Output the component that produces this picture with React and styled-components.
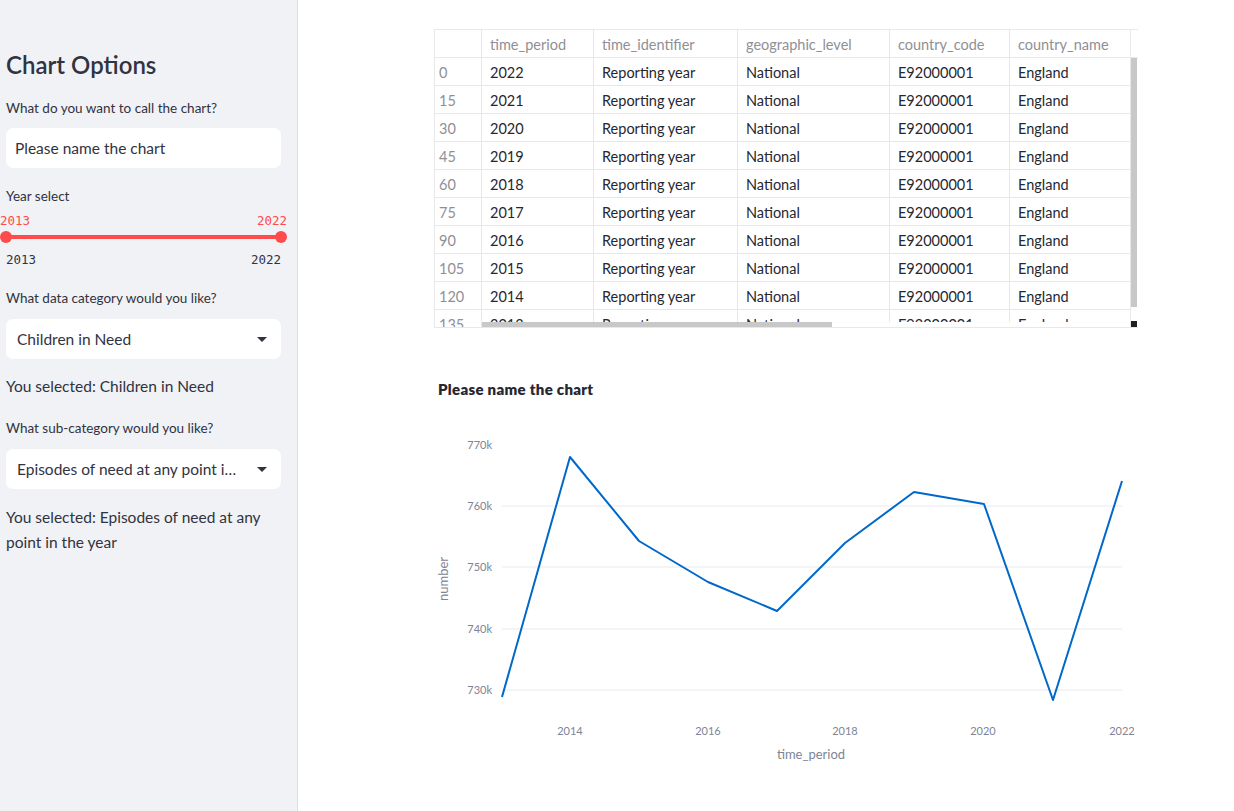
import React from 'react'
import styled, { createGlobalStyle } from 'styled-components'

const GlobalStyle = createGlobalStyle`
  html, body { margin: 0; padding: 0; background: #ffffff; }
  body { font-family: 'Lato', 'Noto Sans', sans-serif; color: #31333f; }
  * { box-sizing: border-box; }
`

const columns = ['time_period', 'time_identifier', 'geographic_level', 'country_code', 'country_name']
const rows = [0, 15, 30, 45, 60, 75, 90, 105, 120, 135].map((idx, i) => ({
  idx,
  cells: [String(2022 - i), 'Reporting year', 'National', 'E92000001', 'England'],
}))

const points = [
  [502, 698], [570, 458], [639, 542], [708, 583], [777, 612],
  [845, 544], [914, 493], [984, 505], [1053, 701], [1122, 482],
]
const yTicks = [['770k', 446, false], ['760k', 507, true], ['750k', 568, true], ['740k', 630, true], ['730k', 691, true]]
const xTicks = [['2014', 570], ['2016', 708], ['2018', 845], ['2020', 983], ['2022', 1122]]

const Page = styled.div`
  display: flex;
  min-height: 811px;
`

const Sidebar = styled.aside`
  width: 298px;
  flex-shrink: 0;
  min-height: 811px;
  background: #f0f2f6;
  border-right: 1px solid #dcdde3;
  padding: 50px 16px 0 6px;
  display: flex;
  flex-direction: column;
`

const Heading = styled.h2`
  margin: 0;
  font-size: 24px;
  line-height: 30px;
  font-weight: 600;
  color: #31333f;
`

const Label = styled.div`
  margin-top: ${p => p.$top}px;
  font-size: 13.5px;
  line-height: 20px;
  color: #31333f;
`

const TextInput = styled.div`
  margin-top: 10px;
  height: 40px;
  background: #ffffff;
  border-radius: 7px;
  padding: 0 9px;
  display: flex;
  align-items: center;
  font-size: 15.5px;
  color: #31333f;
`

const Slider = styled.div`
  display: flex;
  flex-direction: column;
`

const ValueRow = styled.div`
  margin: 6px 0 0 -6px;
  width: 287px;
  height: 16px;
  display: flex;
  justify-content: space-between;
  align-items: center;
  font-family: 'DejaVu Sans Mono', 'Liberation Mono', monospace;
  font-size: 12.5px;
  color: ${p => p.$color};
`

const TickRow = styled(ValueRow)`
  margin: 5px 0 0 0;
  width: 275px;
`

const TrackArea = styled.div`
  position: relative;
  height: 18px;
  width: 275px;
`

const Track = styled.div`
  position: absolute;
  left: 0;
  right: 0;
  top: 7px;
  height: 4px;
  border-radius: 2px;
  background: #ff4b4b;
`

const Thumb = styled.div`
  position: absolute;
  top: 3px;
  left: ${p => (p.$end ? 269 : -6)}px;
  width: 12px;
  height: 12px;
  border-radius: 50%;
  background: #ff4b4b;
`

const Select = styled.div`
  margin-top: 11px;
  height: 40px;
  width: 275px;
  background: #ffffff;
  border-radius: 7px;
  padding: 0 14px 0 11px;
  display: flex;
  align-items: center;
  justify-content: space-between;
  font-size: 15.5px;
  color: #31333f;
  span {
    white-space: nowrap;
  }
`

const Caret = styled.div`
  width: 0;
  height: 0;
  border-left: 5px solid transparent;
  border-right: 5px solid transparent;
  border-top: 5px solid #31333f;
`

const Note = styled.p`
  margin: ${p => p.$top}px 0 0 0;
  font-size: 15.5px;
  line-height: 25px;
  color: #31333f;
  max-width: 262px;
`

const Main = styled.main`
  flex: 1;
  padding: 29px 0 0 136px;
`

const Content = styled.div`
  width: 704px;
  display: flex;
  flex-direction: column;
`

const TableFrame = styled.div`
  position: relative;
  height: 299px;
  overflow: hidden;
  border: 1px solid #e8e8e8;
  border-right: none;
  background: #ffffff;
`

const Row = styled.div`
  display: grid;
  grid-template-columns: 47px 112px 144px 152px 120px 121px 7px;
  height: 28px;
  border-bottom: 1px solid #e8e8e8;
`

const Cell = styled.div`
  display: flex;
  align-items: center;
  padding: 2px 0 0 ${p => (p.$index ? 4 : 8)}px;
  border-right: 1px solid #e8e8e8;
  font-size: 14.5px;
  white-space: nowrap;
  overflow: hidden;
  color: ${p => (p.$muted ? '#8f8f95' : '#262730')};
`

const VTrack = styled.div`
  position: absolute;
  left: 695px;
  top: 28px;
  bottom: 0;
  width: 8px;
  background: #ffffff;
  border-left: 1px solid #e8e8e8;
`

const VThumb = styled.div`
  width: 6px;
  height: 249px;
  background: #c8c8c8;
`

const HTrack = styled.div`
  position: absolute;
  left: 47px;
  right: 8px;
  top: 292px;
  height: 6px;
  background: #ffffff;
`

const HThumb = styled.div`
  width: 350px;
  height: 6px;
  background: #c8c8c8;
`

const Corner = styled.div`
  position: absolute;
  left: 696px;
  top: 291px;
  width: 6px;
  height: 6px;
  background: #1f1f1f;
`

const ChartTitle = styled.div`
  margin: 51px 0 0 4px;
  font-size: 15px;
  line-height: 20px;
  font-weight: 800;
  letter-spacing: 0.3px;
  color: #262730;
`

const ChartSvg = styled.svg`
  display: block;
  width: 704px;
  height: 380px;
  font-family: 'Lato', 'Noto Sans', sans-serif;
`

const LineChart = () => (
  <ChartSvg viewBox="434 400 704 380">
    {yTicks.map(([label, y, grid]) => (
      <g key={label}>
        {grid && <line x1="502" x2="1122" y1={y} y2={y} stroke="#e6e9ef" strokeWidth="1" />}
        <text x="492" y={y + 4} textAnchor="end" fontSize="11" fill="#808495">{label}</text>
      </g>
    ))}
    {xTicks.map(([label, x]) => (
      <text key={label} x={x} y="736" textAnchor="middle" fontSize="11" fill="#808495">{label}</text>
    ))}
    <text x="811" y="760" textAnchor="middle" fontSize="13" fill="#808495">time_period</text>
    <text x="448" y="580" textAnchor="middle" fontSize="13" fill="#808495" transform="rotate(-90 448 580)">number</text>
    <polyline
      points={points.map(p => p.join(',')).join(' ')}
      fill="none"
      stroke="#0068c9"
      strokeWidth="2"
      strokeLinejoin="round"
    />
  </ChartSvg>
)

const App = () => {
  return (
    <Page>
      <GlobalStyle />
      <Sidebar>
        <Heading>Chart Options</Heading>
        <Label $top={18}>What do you want to call the chart?</Label>
        <TextInput>Please name the chart</TextInput>
        <Label $top={18}>Year select</Label>
        <Slider>
          <ValueRow $color="#ff4b4b"><span>2013</span><span>2022</span></ValueRow>
          <TrackArea>
            <Track />
            <Thumb />
            <Thumb $end />
          </TrackArea>
          <TickRow $color="#31333f"><span>2013</span><span>2022</span></TickRow>
        </Slider>
        <Label $top={21}>What data category would you like?</Label>
        <Select>
          <span>Children in Need</span>
          <Caret />
        </Select>
        <Note $top={15}>You selected: Children in Need</Note>
        <Label $top={19}>What sub-category would you like?</Label>
        <Select>
          <span>Episodes of need at any point i…</span>
          <Caret />
        </Select>
        <Note $top={16}>You selected: Episodes of need at any point in the year</Note>
      </Sidebar>
      <Main>
        <Content>
          <TableFrame>
            <Row>
              <Cell />
              {columns.map(c => <Cell key={c} $muted>{c}</Cell>)}
              <Cell />
            </Row>
            {rows.map(r => (
              <Row key={r.idx}>
                <Cell $muted $index>{r.idx}</Cell>
                {r.cells.map((c, i) => <Cell key={i}>{c}</Cell>)}
                <Cell />
              </Row>
            ))}
            <VTrack><VThumb /></VTrack>
            <HTrack><HThumb /></HTrack>
            <Corner />
          </TableFrame>
          <ChartTitle>Please name the chart</ChartTitle>
          <LineChart />
        </Content>
      </Main>
    </Page>
  )
}

export default App
